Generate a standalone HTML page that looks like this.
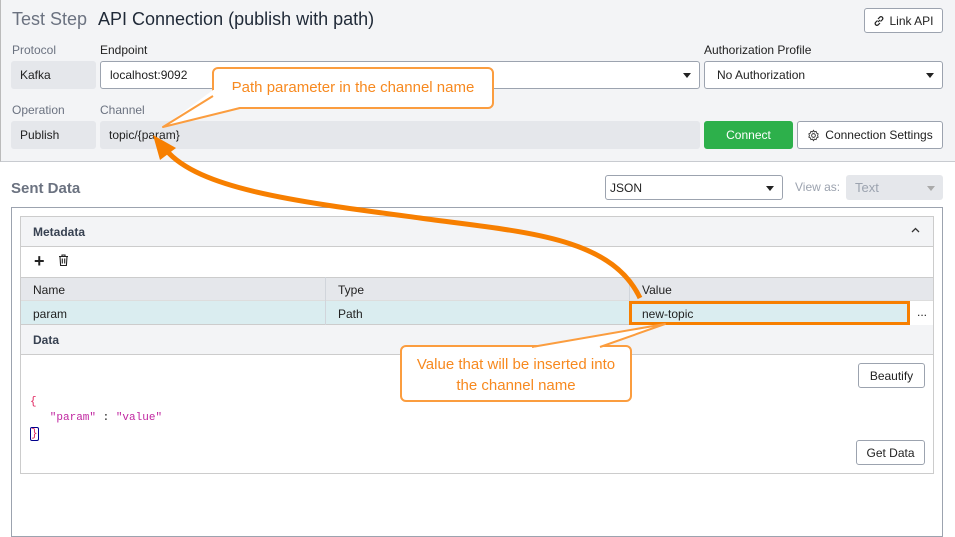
<!DOCTYPE html>
<html><head><meta charset="utf-8"><style>
*{box-sizing:border-box;margin:0;padding:0}
body{width:955px;height:525px;position:relative;background:#fff;font-family:"Liberation Sans",sans-serif;font-size:12px;color:#222;overflow:hidden}
.a{position:absolute}
.box{position:absolute;border-radius:3px;display:flex;align-items:center;padding-left:9px;font-size:12px}
.sel{background:#fff;border:1px solid #9ca3af}
.car{position:absolute;right:8px;top:50%;margin-top:-2px;border-left:4px solid transparent;border-right:4px solid transparent;border-top:5px solid #222}
.lbl{position:absolute;font-size:12px;color:#6b7280}
.btn{position:absolute;background:#fff;border:1px solid #9ca3af;border-radius:3px;display:flex;align-items:center;justify-content:center;font-size:12px;color:#222}
.call{position:absolute;background:#fff;border:2px solid #fb9d3f;border-radius:6px;color:#f7891f;font-size:15px;text-align:center}
</style></head><body>
<div class="a" style="left:0;top:0;width:955px;height:162px;background:#f3f4f6;border-bottom:1px solid #c8cbd0;border-left:1px solid #bbb"></div>
<div class="a" style="left:12px;top:9px;font-size:18px;color:#6b7280">Test Step</div>
<div class="a" style="left:98px;top:9px;font-size:18px;color:#1f2937">API Connection (publish with path)</div>
<div class="btn" style="left:864px;top:8px;width:79px;height:25px">
<svg width="12" height="12" viewBox="0 0 12 12" style="margin-right:4px"><path d="M5 7L7 5M4.5 5.5L2.5 7.5a1.8 1.8 0 0 0 2.5 2.5L7 8M7.5 6.5L9.5 4.5a1.8 1.8 0 0 0-2.5-2.5L5 4" fill="none" stroke="#222" stroke-width="1.2"/></svg>Link API</div>
<div class="lbl" style="left:12px;top:43px">Protocol</div>
<div class="lbl" style="left:100px;top:43px;color:#222">Endpoint</div>
<div class="lbl" style="left:704px;top:43px;color:#222">Authorization Profile</div>
<div class="box" style="left:11px;top:61px;width:85px;height:28px;background:#e5e7eb">Kafka</div>
<div class="box sel" style="left:100px;top:61px;width:600px;height:28px">localhost:9092<span class="car"></span></div>
<div class="box sel" style="left:704px;top:61px;width:239px;height:28px;padding-left:12px">No Authorization<span class="car"></span></div>
<div class="lbl" style="left:12px;top:103px">Operation</div>
<div class="lbl" style="left:100px;top:103px">Channel</div>
<div class="box" style="left:11px;top:121px;width:85px;height:28px;background:#e5e7eb">Publish</div>
<div class="box" style="left:100px;top:121px;width:600px;height:28px;background:#e5e7eb">topic/{param}</div>
<div class="btn" style="left:704px;top:121px;width:89px;height:28px;background:#2db04b;border-color:#2db04b;color:#fff">Connect</div>
<div class="btn" style="left:797px;top:121px;width:146px;height:28px">
<svg width="13" height="13" viewBox="0 0 14 14" style="margin-right:5px"><circle cx="7" cy="7" r="2" fill="none" stroke="#333"/><path d="M7 1.5l1 1.6 1.8-.5.5 1.8 1.7.8-.6 1.8.6 1.8-1.7.8-.5 1.8-1.8-.5L7 12.5 6 10.9l-1.8.5-.5-1.8L2 8.8 2.6 7 2 5.2l1.7-.8.5-1.8 1.8.5z" fill="none" stroke="#333"/></svg>Connection Settings</div>
<div class="a" style="left:11px;top:180px;font-size:15px;font-weight:bold;color:#6b7280">Sent Data</div>
<div class="box sel" style="left:605px;top:175px;width:178px;height:25px;padding-left:4px">JSON<span class="car"></span></div>
<div class="lbl" style="left:795px;top:180px;color:#9ca3af">View as:</div>
<div class="box" style="left:846px;top:175px;width:97px;height:25px;background:#e5e7eb;color:#9ca3af;font-size:13px">Text<span class="car" style="border-top-color:#aaa"></span></div>
<div class="a" style="left:11px;top:207px;width:932px;height:330px;border:1px solid #9ca3af"></div>
<div class="a" style="left:20px;top:216px;width:914px;height:258px;border:1px solid #ccc"></div>
<div class="a" style="left:21px;top:217px;width:912px;height:30px;background:#f3f4f6;border-bottom:1px solid #ccc"></div>
<div class="a" style="left:33px;top:225px;font-weight:bold;color:#374151">Metadata</div>
<svg class="a" style="left:911px;top:227px" width="9" height="6" viewBox="0 0 9 6"><path d="M1 5L4.5 1.5L8 5" fill="none" stroke="#333" stroke-width="1.3"/></svg>
<div class="a" style="left:34px;top:251px;font-size:18px;font-weight:bold">+</div>
<svg class="a" style="left:58px;top:254px" width="11" height="12" viewBox="0 0 11 12"><path d="M1 2.5h9M4 2.5V1h3v1.5M2 2.5l.6 9h5.8l.6-9M4.3 4.5v5M6.7 4.5v5" fill="none" stroke="#222" stroke-width="1.1"/></svg>
<div class="a" style="left:21px;top:277px;width:912px;height:24px;background:#e5e7eb;border-top:1px solid #ccc;border-bottom:1px solid #ddd"></div>
<div class="a" style="left:21px;top:301px;width:888px;height:24px;background:#daedf0;border-bottom:1px solid #ccc"></div>
<div class="a" style="left:325px;top:277px;width:1px;height:48px;background:#d1d5db"></div>
<div class="a" style="left:629px;top:277px;width:1px;height:24px;background:#d1d5db"></div>
<div class="a" style="left:33px;top:283px">Name</div>
<div class="a" style="left:338px;top:283px">Type</div>
<div class="a" style="left:642px;top:283px">Value</div>
<div class="a" style="left:33px;top:307px">param</div>
<div class="a" style="left:338px;top:307px">Path</div>
<div class="a" style="left:629px;top:301px;width:281px;height:24px;border:3px solid #f77f00"></div>
<div class="a" style="left:642px;top:307px">new-topic</div>
<div class="a" style="left:917px;top:305px">...</div>
<div class="a" style="left:21px;top:325px;width:912px;height:30px;background:#f3f4f6;border-bottom:1px solid #ccc"></div>
<div class="a" style="left:33px;top:333px;font-weight:bold;color:#374151">Data</div>
<div class="btn" style="left:858px;top:363px;width:67px;height:25px">Beautify</div>
<div class="btn" style="left:856px;top:440px;width:69px;height:25px">Get Data</div>
<div class="a" style="left:30px;top:394px;font-family:'Liberation Mono',monospace;font-size:11px;line-height:16px;color:#c026a0">
<div style="color:#e0245e">{</div><div>&nbsp;&nbsp;&nbsp;"param" <span style="color:#222">:</span> "value"</div><div><span style="color:#e0245e;border:1px solid #00008b;border-radius:2px">}</span></div></div>
<svg class="a" style="left:0;top:0" width="955" height="525">
<path d="M640 298 C610 235 520 232 420 218 C300 202 200 190 166 150" fill="none" stroke="#f77f00" stroke-width="5"/>
<path d="M153 135 L176 148 L160 160 Z" fill="#f77f00"/>
</svg>
<div class="call" style="left:212px;top:67px;width:282px;height:42px;line-height:38px">Path parameter in the channel name</div>
<div class="call" style="left:400px;top:345px;width:232px;height:57px;padding:7px 6px 0;line-height:21px">Value that will be inserted into<br>the channel name</div>
<svg class="a" style="left:0;top:0" width="955" height="525">
<path d="M213 90 L163 127 L240 107 L240 90 Z" fill="#fff"/>
<path d="M213 96 L163 127 L240 108" fill="none" stroke="#fb9d3f" stroke-width="2" stroke-linejoin="round"/>
<path d="M532 347 L665 324 L600 347 Z" fill="#fff"/>
<path d="M532 347 L665 324 L600 347" fill="none" stroke="#fb9d3f" stroke-width="2" stroke-linejoin="round"/>
<path d="M534 348.5 L598 348.5" stroke="#fff" stroke-width="2"/>
</svg>
</body></html>
